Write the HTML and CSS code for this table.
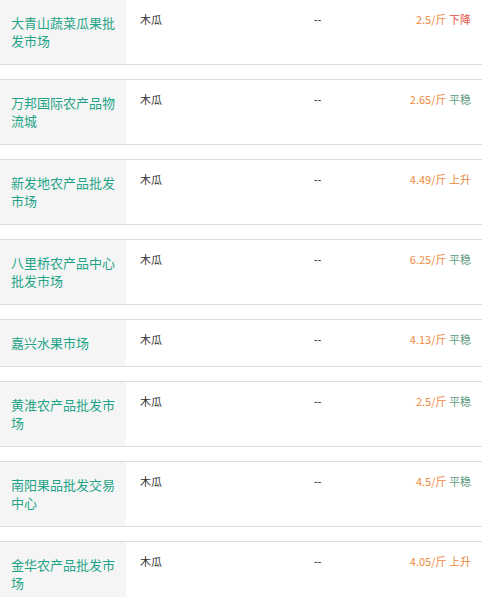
FILE: index.html
```html
<!DOCTYPE html>
<html lang="zh-CN">
<head>
<meta charset="utf-8">
<link rel="stylesheet" href="styles.css">
</head>
<body>
<div class="list">
  <div class="row"><div class="name">大青山蔬菜瓜果批发市场</div><div class="product">木瓜</div><div class="spec">--</div><div class="price"><span class="num">2.5/斤</span> <span class="down">下降</span></div></div>
  <div class="row"><div class="name">万邦国际农产品物流城</div><div class="product">木瓜</div><div class="spec">--</div><div class="price"><span class="num">2.65/斤</span> <span class="flat">平稳</span></div></div>
  <div class="row"><div class="name">新发地农产品批发市场</div><div class="product">木瓜</div><div class="spec">--</div><div class="price"><span class="num">4.49/斤</span> <span class="up">上升</span></div></div>
  <div class="row"><div class="name">八里桥农产品中心批发市场</div><div class="product">木瓜</div><div class="spec">--</div><div class="price"><span class="num">6.25/斤</span> <span class="flat">平稳</span></div></div>
  <div class="row"><div class="name">嘉兴水果市场</div><div class="product">木瓜</div><div class="spec">--</div><div class="price"><span class="num">4.13/斤</span> <span class="flat">平稳</span></div></div>
  <div class="row"><div class="name">黄淮农产品批发市场</div><div class="product">木瓜</div><div class="spec">--</div><div class="price"><span class="num">2.5/斤</span> <span class="flat">平稳</span></div></div>
  <div class="row"><div class="name">南阳果品批发交易中心</div><div class="product">木瓜</div><div class="spec">--</div><div class="price"><span class="num">4.5/斤</span> <span class="flat">平稳</span></div></div>
  <div class="row"><div class="name">金华农产品批发市场</div><div class="product">木瓜</div><div class="spec">--</div><div class="price"><span class="num">4.05/斤</span> <span class="up">上升</span></div></div>
</div>
</body>
</html>
```
FILE: styles.css
```css
html, body {
  margin: 0;
  padding: 0;
  background: #fff;
  overflow: hidden;
}
body {
  font-family: "Noto Sans CJK SC", "Liberation Sans", sans-serif;
  color: #333;
}
.list {
  margin-top: -1px;
  display: flex;
  flex-direction: column;
  gap: 14px;
}
.row {
  display: flex;
  border-top: 1px solid #dcdcdc;
  border-bottom: 1px solid #dcdcdc;
}
.name {
  width: 126px;
  box-sizing: border-box;
  padding: 14px 11px;
  background: #f5f5f5;
  color: #1fa487;
  font-size: 13px;
  line-height: 18px;
  word-break: break-all;
}
.product, .spec, .price {
  font-size: 11px;
  line-height: 12px;
  padding-top: 13px;
}
.product {
  width: 174px;
  box-sizing: border-box;
  padding-left: 14px;
}
.spec {
  width: 60px;
  box-sizing: border-box;
  padding-left: 14px;
  font-family: "Liberation Sans", sans-serif;
}
.price {
  flex: 1;
  text-align: right;
  padding-right: 11px;
  white-space: nowrap;
}
.num { color: #ef8a3c; }
.down { color: #df5646; }
.flat { color: #5e9c7e; }
.up { color: #e98a3e; }
```
